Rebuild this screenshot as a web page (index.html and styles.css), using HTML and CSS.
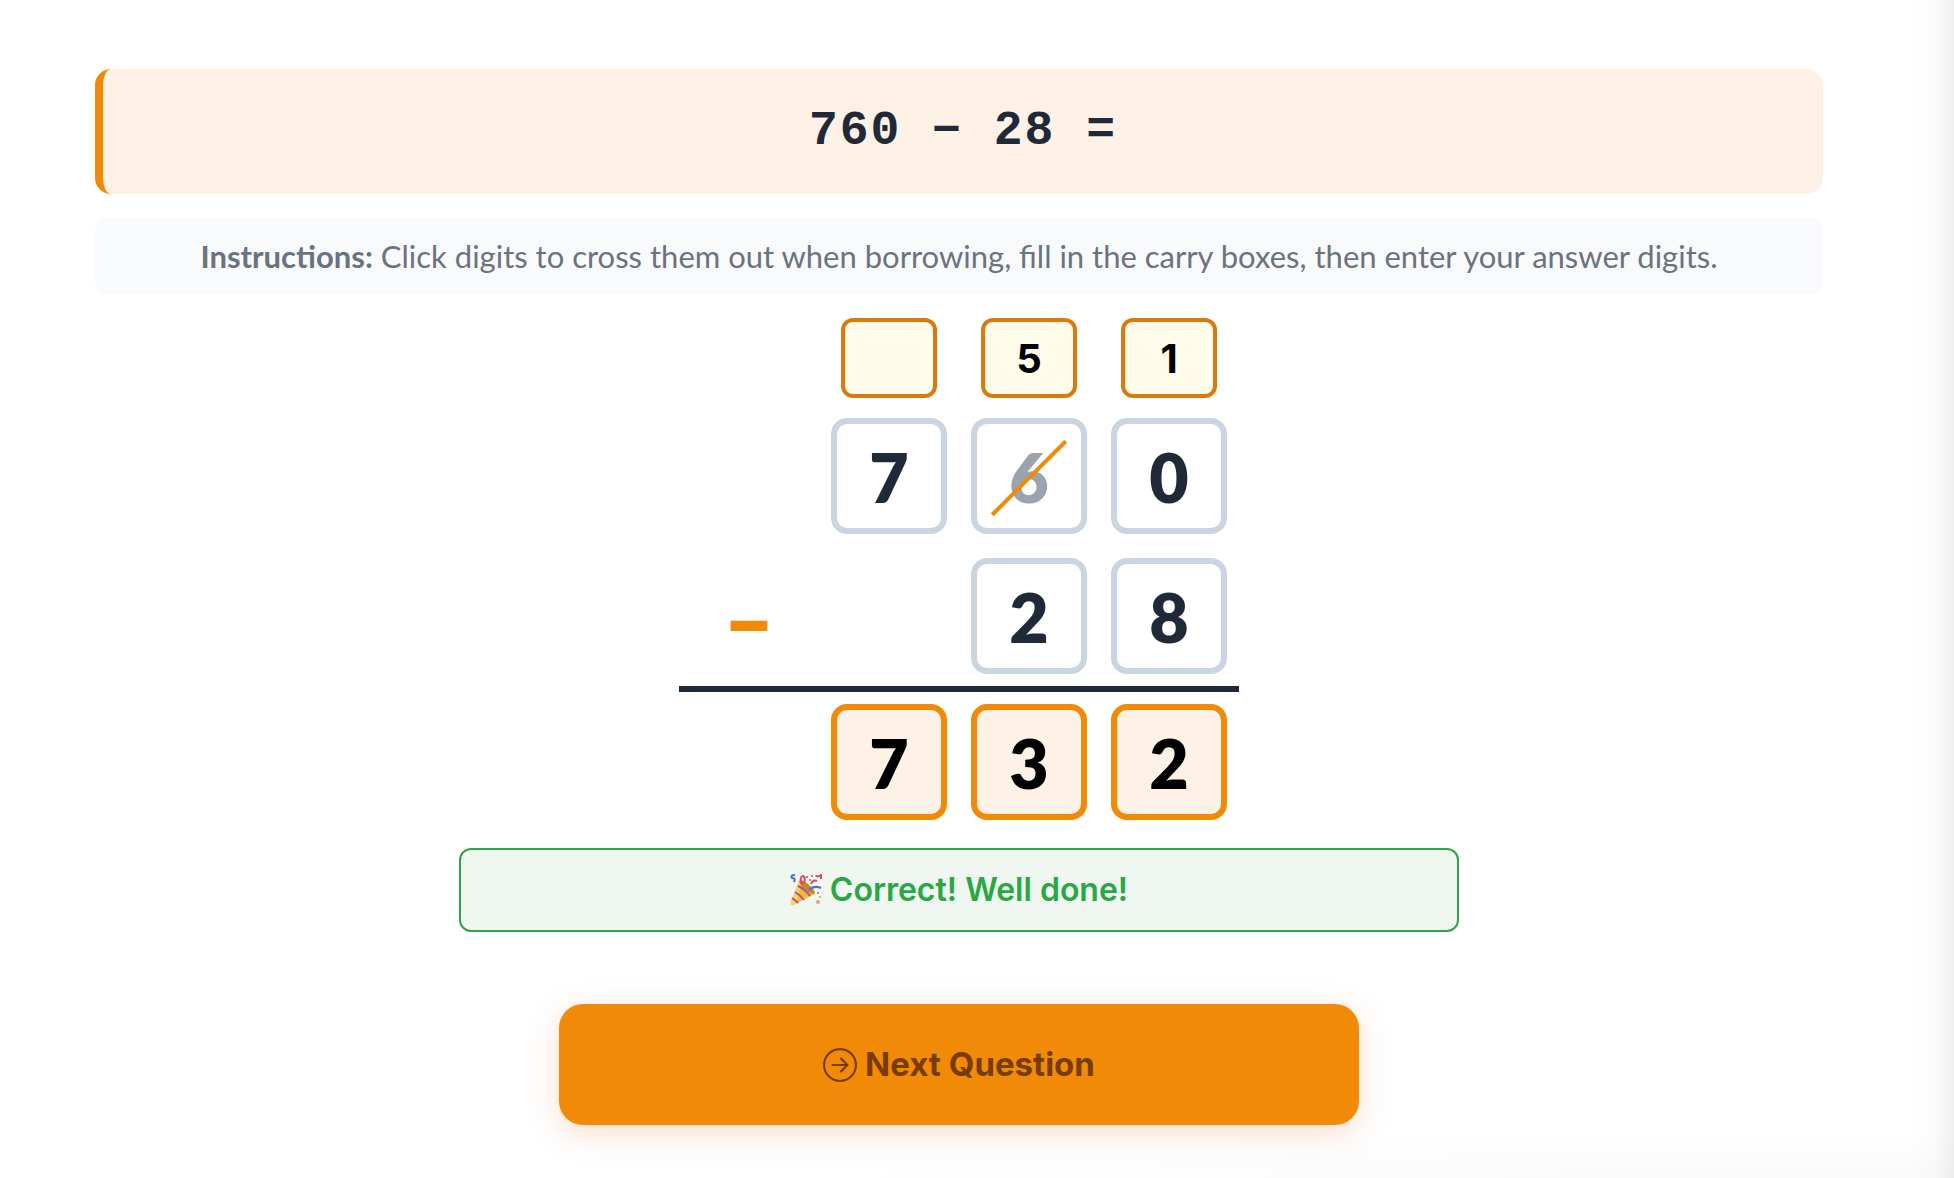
FILE: index.html
```html
<!DOCTYPE html>
<html lang="en">
<head>
  <meta charset="UTF-8" />
  <meta name="viewport" content="width=device-width, initial-scale=1.0" />
  <title>Column Subtraction</title>
  <link rel="stylesheet" href="styles.css">
</head>
<body>
  <main class="practice">
    <!-- Question -->
    <h1 class="question">760 − 28 =</h1>

    <p class="instructions">
      <strong>Instructions:</strong> Click digits to cross them out when borrowing, fill in the carry boxes, then enter your answer digits.
    </p>

    <!-- Working area -->
    <section class="column-grid" aria-label="Column subtraction">
      <div class="row carry-row">
        <span></span>
        <input class="carry" type="text" maxlength="2" aria-label="Carry hundreds" value="" />
        <input class="carry" type="text" maxlength="2" aria-label="Carry tens" value="5" />
        <input class="carry" type="text" maxlength="2" aria-label="Carry ones" value="1" />
      </div>
      <div class="row digit-row">
        <span></span>
        <button class="digit" type="button">7</button>
        <button class="digit crossed" type="button">6</button>
        <button class="digit" type="button">0</button>
      </div>
      <div class="row digit-row">
        <span class="operator">−</span>
        <span></span>
        <button class="digit" type="button">2</button>
        <button class="digit" type="button">8</button>
      </div>
      <div class="row answer-row">
        <span></span>
        <input class="digit answer" type="text" maxlength="1" aria-label="Answer hundreds" value="7" />
        <input class="digit answer" type="text" maxlength="1" aria-label="Answer tens" value="3" />
        <input class="digit answer" type="text" maxlength="1" aria-label="Answer ones" value="2" />
      </div>
    </section>

    <!-- Feedback -->
    <div class="feedback" role="status">
      <svg class="party" viewBox="0 0 32 32" aria-hidden="true">
        <path d="M9 7 L25 20 L3 31 Q0 32 1 28 Z" fill="#f5b830" />
        <path d="M9 7 L12 9 L6 30 L3 31 Q0 32 1 28 Z" fill="#fbd45c" />
        <path d="M8 12 Q15 15 20 22 M5 18 Q10 21 14 26 M2 24 Q5 26 8 29" fill="none" stroke="#a552a8" stroke-width="2" />
        <ellipse cx="17" cy="13" rx="3" ry="10" transform="rotate(-50 17 13)" fill="#c9881c" />
        <path d="M5 1 Q0 1 2 4 Q6 4 4 8 M19 16 Q24 11 31 14" fill="none" stroke="#3e79cf" stroke-width="2" />
        <path d="M12 11 Q9 3 13 2 Q16 3 14 9 M21 10 Q23 5 27 7 M26 1 Q27 4 31 1 V5" fill="none" stroke="#dc4667" stroke-width="2" />
        <circle cx="17" cy="3" r="1" fill="#3e79cf" />
        <circle cx="20" cy="6" r="1" fill="#dc4667" />
        <circle cx="22" cy="2" r="1" fill="#a552a8" />
        <circle cx="28" cy="19" r="1" fill="#dc4667" />
        <circle cx="30" cy="23" r="1" fill="#a7b84a" />
        <circle cx="28" cy="28" r="2" fill="#e2a184" />
      </svg>
      <span>Correct! Well done!</span>
    </div>

    <button class="next-button" type="button">
      <svg class="next-icon" viewBox="0 0 16 16" fill="currentColor" aria-hidden="true">
        <path fill-rule="evenodd" d="M1 8a7 7 0 1 0 14 0A7 7 0 0 0 1 8m15 0A8 8 0 1 1 0 8a8 8 0 0 1 16 0M4.500 7.500a.5.5 0 0 0 0 1h5.793l-2.147 2.146a.5.5 0 0 0 .708.708l3-3a.5.5 0 0 0 0-.708l-3-3a.5.5 0 1 0-.708.708L10.293 7.500z" />
      </svg>
      <span>Next Question</span>
    </button>
  </main>

  <script>
    // Toggle the strike on a digit when borrowing
    document.querySelectorAll('button.digit').forEach(button => {
      button.addEventListener('click', function() {
        this.classList.toggle('crossed');
      });
    });
  </script>
</body>
</html>
```
FILE: styles.css
```css
/* Global Styles */
* { box-sizing: border-box; margin: 0; padding: 0; }
body {
  font-family: 'Inter', sans-serif;
  color: #1f2937;
  min-height: 100vh;
  /* Soft shade along the right and bottom edges */
  background:
    linear-gradient(to left, rgba(0, 0, 0, 0.06), rgba(0, 0, 0, 0.01) 20px, transparent 48px),
    radial-gradient(ellipse 50% 50px at 90% 100%, rgba(0, 0, 0, 0.02), transparent),
    #fff;
}
button, input { font-family: inherit; }
.practice {
  display: flex;
  flex-direction: column;
  align-items: center;
  padding: 69px 131px 52px 95px;
}
/* Question */
.question {
  width: 100%;
  padding: 32px;
  border-left: 8px solid #f18a07;
  border-radius: 16px;
  background-color: #fef1e6;
  font-family: 'Liberation Mono', monospace;
  font-size: 48px;
  font-weight: 700;
  line-height: 61px;
  letter-spacing: 2px;
  text-align: center;
  white-space: pre;
}
.instructions {
  width: 100%;
  margin-top: 24px;
  padding: 16px;
  border-radius: 12px;
  background-color: #f8fafc;
  color: #6b7280;
  font-family: 'Lato', sans-serif;
  font-size: 31px;
  line-height: 44px;
  text-align: center;
}
/* Working area */
.column-grid { margin-top: 24px; }
.row {
  display: grid;
  grid-template-columns: repeat(4, 140px);
  justify-items: center;
  align-items: center;
}
.digit-row {
  min-height: 116px;
  margin-top: 20px;
}
.digit-row + .digit-row { margin-top: 24px; }
.carry {
  width: 96px;
  height: 80px;
  border: 4px solid #d97a10;
  border-radius: 12px;
  background-color: #fffbeb;
  color: #000;
  font-size: 40px;
  font-weight: 700;
  text-align: center;
}
.digit {
  position: relative;
  width: 116px;
  height: 116px;
  border: 6px solid #cbd5e1;
  border-radius: 16px;
  background-color: #fff;
  color: #1f2937;
  font-family: 'Lato', sans-serif;
  font-size: 68px;
  font-weight: 800;
  text-align: center;
  cursor: pointer;
}
/* Crossed out digit */
.crossed { color: #9ca3af; }
.crossed::after {
  content: '';
  position: absolute;
  top: 50%;
  left: 0;
  width: 100%;
  height: 4px;
  background-color: #f18a07;
  transform: rotate(-45deg);
}
.operator {
  padding-top: 8px;
  color: #f18a07;
  font-size: 72px;
  font-weight: 800;
}
.answer-row {
  margin-top: 12px;
  padding-top: 12px;
  border-top: 6px solid #1f2937;
}
.answer {
  border-color: #f18a07;
  background-color: #fef1e6;
  color: #000;
  cursor: text;
}
/* Feedback */
.feedback {
  display: flex;
  align-items: center;
  justify-content: center;
  gap: 8px;
  width: 100%;
  max-width: 1000px;
  margin-top: 28px;
  padding: 20px;
  border: 2px solid #2fa24b;
  border-radius: 12px;
  background-color: #f0f7f0;
  color: #28a745;
  font-size: 32px;
  font-weight: 600;
  line-height: 40px;
}
.party { width: 32px; height: 32px; }
/* Next button */
.next-button {
  display: flex;
  align-items: center;
  justify-content: center;
  gap: 8px;
  width: 100%;
  max-width: 800px;
  margin-top: 72px;
  padding: 40px;
  border: none;
  border-radius: 24px;
  background-color: #f18a07;
  box-shadow: 0 8px 30px rgba(241, 120, 50, 0.25);
  color: #783c00;
  font-size: 33px;
  font-weight: 700;
  line-height: 41px;
  cursor: pointer;
}
.next-icon { width: 34px; height: 34px; }
```
